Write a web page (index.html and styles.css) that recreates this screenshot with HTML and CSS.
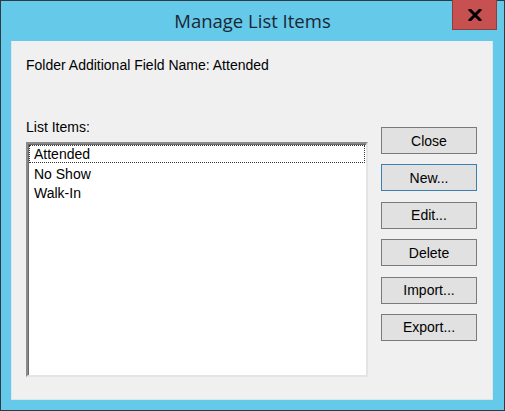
FILE: index.html
```html
<!DOCTYPE html>
<html>
<head>
<meta charset="utf-8">
<link rel="stylesheet" href="styles.css">
</head>
<body>
<div class="window">
  <div class="titlebar">
    <div class="title">Manage List Items</div>
    <div class="close-btn"><svg width="14" height="12" viewBox="0 0 14 12"><path d="M2 1 L12 11 M12 1 L2 11" stroke="#000" stroke-width="3" stroke-linecap="square"/></svg></div>
  </div>
  <div class="client">
    <div class="field-label">Folder Additional Field Name: Attended</div>
    <div class="main">
      <div class="list-col">
        <div class="list-label">List Items:</div>
        <div class="listbox">
          <div class="item focused">Attended</div>
          <div class="item">No Show</div>
          <div class="item">Walk-In</div>
        </div>
      </div>
      <div class="buttons">
        <div class="btn">Close</div>
        <div class="btn default">New...</div>
        <div class="btn">Edit...</div>
        <div class="btn">Delete</div>
        <div class="btn">Import...</div>
        <div class="btn">Export...</div>
      </div>
    </div>
  </div>
</div>
</body>
</html>
```
FILE: styles.css
```css
html, body {
  margin: 0;
  padding: 0;
  background: #ffffff;
}
.window {
  position: relative;
  width: 503px;
  height: 409px;
  border: 1px solid #2e3b44;
  background: #65c9ea;
  display: flex;
  flex-direction: column;
}
.titlebar {
  height: 40px;
  display: flex;
  align-items: center;
  justify-content: center;
}
.title {
  font-family: "Open Sans", "Noto Sans", sans-serif;
  font-size: 18.5px;
  color: #1b2733;
  margin-top: -1px;
}
.close-btn {
  position: absolute;
  top: -1px;
  left: 451px;
  width: 45px;
  height: 30px;
  background: #c75050;
  border: 1px solid #8e3c3c;
  border-top: none;
  box-sizing: border-box;
  display: flex;
  align-items: center;
  justify-content: center;
}
.client {
  margin-left: 10px;
  width: 482px;
  height: 359px;
  background: #f0f0f0;
  box-sizing: border-box;
  border: 1px solid #d9e6ec;
  border-top: none;
  padding: 16px 0 0 14px;
  font-family: "Liberation Sans", Arial, sans-serif;
  font-size: 14px;
  color: #000;
}
.field-label {
  height: 16px;
  line-height: 16px;
}
.main {
  display: flex;
  margin-top: 54px;
}
.list-col {
  display: flex;
  flex-direction: column;
  width: 342px;
}
.list-label {
  height: 16px;
  line-height: 16px;
  margin-top: -8px;
  margin-bottom: 7px;
}
.listbox {
  width: 342px;
  height: 235px;
  box-sizing: border-box;
  background: #fff;
  border-top: 2px solid #8a8a8a;
  border-left: 2px solid #8a8a8a;
  border-right: 2px solid #e4e4e4;
  border-bottom: 2px solid #e4e4e4;
  box-shadow: inset 1px 1px 0 #6a6a6a;
  padding: 1px 1px;
}
.item {
  height: 19.5px;
  line-height: 19px;
  padding-left: 5px;
  box-sizing: border-box;
}
.item.focused {
  outline: 1px dotted #333;
  outline-offset: -1px;
  height: 18px;
  line-height: 18px;
  margin-bottom: 1.5px;
}
.buttons {
  display: flex;
  flex-direction: column;
  gap: 10.4px;
  margin-left: 13px;
}
.btn {
  width: 96px;
  height: 27px;
  box-sizing: border-box;
  background: #e1e1e1;
  border: 1px solid #7a7a7a;
  display: flex;
  align-items: center;
  justify-content: center;
}
.btn.default {
  border-color: #3c7fb1;
}
```
